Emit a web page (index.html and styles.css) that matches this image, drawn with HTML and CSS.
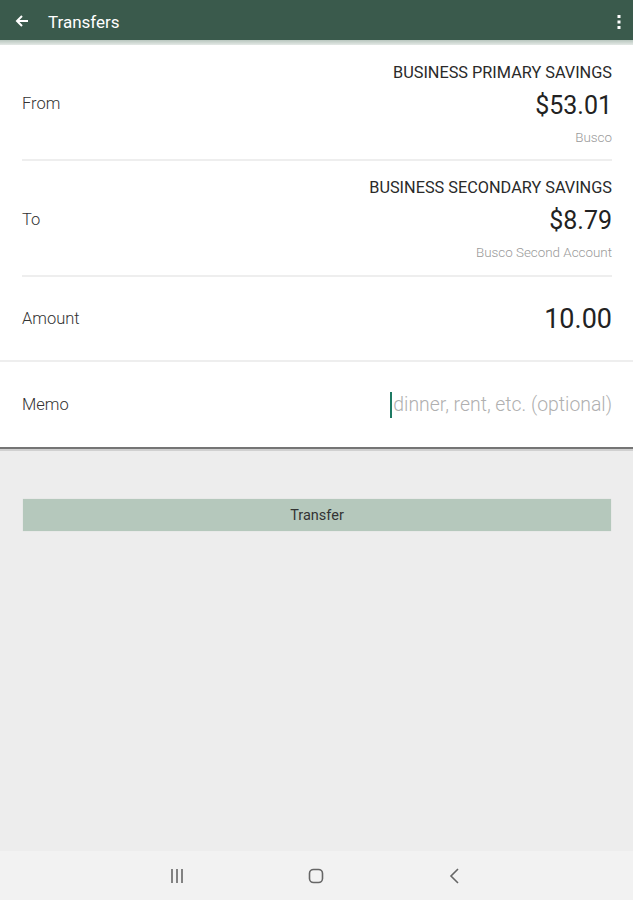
FILE: index.html
```html
<!DOCTYPE html>
<html lang="en">
  <head>
    <meta charset="UTF-8" />
    <meta name="viewport" content="width=device-width, initial-scale=1.0" />
    <title>Transfers</title>
    <link rel="stylesheet" href="styles.css">
  </head>
  <body>
    <div class="screen">
      <header class="toolbar">
        <svg class="back" width="16" height="16" viewBox="0 0 16 16">
          <path d="M14 8H3M8 3L3 8l5 5" fill="none" stroke="#fff" stroke-width="2" />
        </svg>
        <span class="title">Transfers</span>
        <svg class="more" width="4" height="14" viewBox="0 0 4 14">
          <rect x="0.5" y="0" width="3" height="3" fill="#fff" />
          <rect x="0.5" y="5.5" width="3" height="3" fill="#fff" />
          <rect x="0.5" y="11" width="3" height="3" fill="#fff" />
        </svg>
      </header>
      <div class="toolbar-shadow"></div>

      <form class="form">
        <div class="row account">
          <span class="label">From</span>
          <div class="acct">
            <div class="acct-name">BUSINESS PRIMARY SAVINGS</div>
            <div class="acct-bal">$53.01</div>
            <div class="acct-nick">Busco</div>
          </div>
        </div>
        <div class="row account second">
          <span class="label">To</span>
          <div class="acct">
            <div class="acct-name">BUSINESS SECONDARY SAVINGS</div>
            <div class="acct-bal">$8.79</div>
            <div class="acct-nick">Busco Second Account</div>
          </div>
        </div>
        <div class="row amount">
          <span class="label">Amount</span>
          <span class="amt">10.00</span>
        </div>
        <div class="row memo">
          <span class="label">Memo</span>
          <span class="memo-input"><span class="cursor"></span>dinner, rent, etc. (optional)</span>
        </div>
      </form>

      <div class="actions">
        <button type="button" class="transfer">Transfer</button>
      </div>

      <nav class="navbar">
        <svg width="16" height="16" viewBox="0 0 16 16">
          <path d="M3 1v14M8 1v14M13 1v14" stroke="#666" stroke-width="1.6" />
        </svg>
        <svg width="16" height="16" viewBox="0 0 16 16">
          <rect x="1.5" y="1.5" width="13" height="13" rx="4" fill="none" stroke="#666" stroke-width="1.6" />
        </svg>
        <svg width="16" height="16" viewBox="0 0 16 16">
          <path d="M11 1L4 8l7 7" fill="none" stroke="#666" stroke-width="1.6" />
        </svg>
      </nav>
    </div>
  </body>
</html>
```

FILE: styles.css
```css
body {
  margin: 0;
  padding: 0;
  font-family: Roboto, "Liberation Sans", sans-serif;
  background: #ededed;
}
.screen {
  width: 633px;
  height: 900px;
  display: flex;
  flex-direction: column;
  background: #ededed;
}
.toolbar {
  height: 40px;
  background: #3a5a4c;
  display: flex;
  align-items: center;
  padding: 0 12px 0 14px;
  color: #fff;
}
.back {
  margin-top: 2px;
}
.title {
  font-size: 17px;
  margin-left: 18px;
  flex: 1;
  margin-top: 3px;
}
.more {
  margin-top: 3px;
}
.toolbar-shadow {
  height: 5px;
  background: linear-gradient(#b8c6be, #e4e9e6);
}
.form {
  background: #fff;
  border-bottom: 2px solid #757575;
  box-shadow: 0 2px 0 #d0d0d0;
}
.row {
  display: flex;
  align-items: center;
  justify-content: space-between;
  padding: 0 21px 0 22px;
}
.label {
  font-size: 16.5px;
  color: #333;
  font-weight: 300;
}
.account {
  margin: 0 21px 0 22px;
  padding: 0;
  border-bottom: 2px solid #eeeeee;
}
.account .label {
  margin-top: 2px;
}
.acct {
  box-sizing: border-box;
  text-align: right;
  padding-top: 19px;
  height: 114px;
}
.second .acct {
  padding-top: 18px;
}
.acct-name {
  font-size: 16.3px;
  color: #2a2a2a;
  line-height: 18px;
}
.acct-bal {
  font-size: 25px;
  color: #222;
  line-height: 28px;
  margin-top: 10px;
}
.acct-nick {
  font-size: 13.4px;
  color: #999;
  margin-top: 10px;
  line-height: 15px;
  font-weight: 300;
}
.amount {
  height: 83px;
  border-bottom: 2px solid #eeeeee;
}
.amt {
  font-size: 27px;
  color: #222;
}
.memo {
  height: 85px;
}
.memo-input {
  font-size: 19.4px;
  color: #b0b0b0;
  font-weight: 300;
  display: flex;
  align-items: center;
}
.cursor {
  display: inline-block;
  width: 2px;
  height: 26px;
  background: #1e7a63;
  margin-right: 1px;
}
.actions {
  padding: 50px 22px 0 23px;
  flex: 1;
}
.transfer {
  width: 100%;
  height: 32px;
  border: none;
  background: #b5c8bc;
  color: #333;
  font-family: Roboto, "Liberation Sans", sans-serif;
  font-size: 14.5px;
  box-shadow: 0 0 1px #cfd6d1;
}
.navbar {
  height: 49px;
  background: #f2f2f2;
  display: flex;
  justify-content: center;
  align-items: center;
  gap: 123px;
  padding-right: 2px;
}
```
